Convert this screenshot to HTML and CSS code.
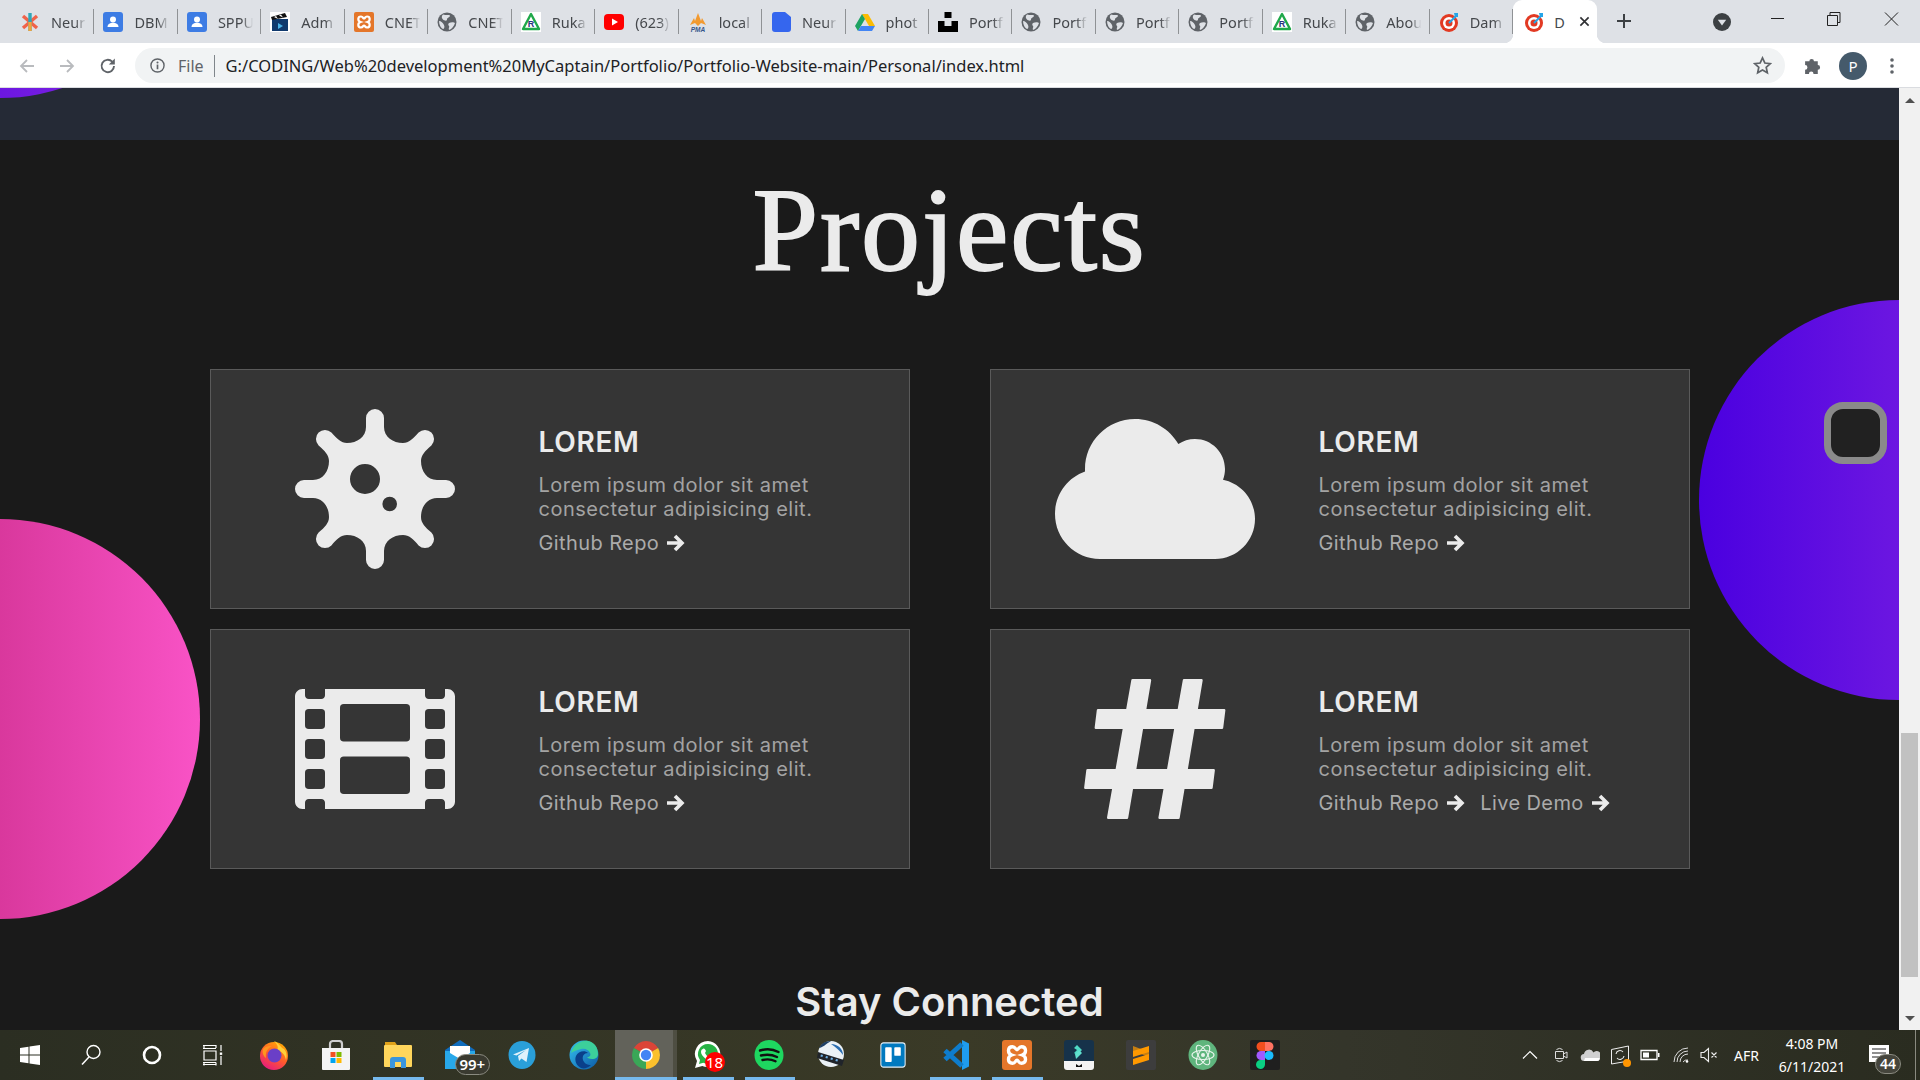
FILE: index.html
```html
<!DOCTYPE html>
<html lang="en">
<head>
<meta charset="utf-8">
<title>Projects</title>
<link rel="stylesheet" href="styles.css">
</head>
<body>
<svg class="defs" aria-hidden="true">
<defs>
<linearGradient id="edgeg" x1="0" y1="0" x2="1" y2="1"><stop offset="0" stop-color="#35c1f1"/><stop offset="1" stop-color="#0c59a4"/></linearGradient>
<linearGradient id="foxg" x1="0.8" y1="0" x2="0.2" y2="1"><stop offset="0" stop-color="#ffb000"/><stop offset="0.5" stop-color="#ff5a2c"/><stop offset="1" stop-color="#e31587"/></linearGradient>
<symbol id="f-star" viewBox="0 0 20 20"><path d="M3 4l14 12" stroke="#f0634a" stroke-width="3.4"/><path d="M3 16L17 4" stroke="#f0634a" stroke-width="3.4"/><path d="M10 1v18" stroke="#2fa6b8" stroke-width="3.4"/><path d="M10 10v9" stroke="#f2a23c" stroke-width="3.4"/></symbol>
<symbol id="f-user" viewBox="0 0 20 20"><rect width="20" height="20" rx="3" fill="#3d7ce4"/><circle cx="10" cy="7.5" r="3" fill="#fff"/><path d="M4.500 15c0-3 3-4.200 5.500-4.200s5.500 1.200 5.500 4.200z" fill="#fff"/></symbol>
<symbol id="f-clap" viewBox="0 0 20 20"><rect width="20" height="20" fill="#fff"/><path d="M2 7h16v12H2z" fill="#103a6e"/><path d="M1 5l14-4 2 4-15 3z" fill="#111"/><path d="M4 5l2-1 2 3zM9 3.500l2-1 2 3z" fill="#fff"/><path d="M8 11l5 3-5 3z" fill="#4ab3e8"/></symbol>
<symbol id="f-xampp" viewBox="0 0 20 20"><rect width="20" height="20" rx="2" fill="#e4762a"/><path d="M7 4.500C3.500 4.500 3.500 9 6.500 10 3.500 11 3.500 15.500 7 15.500c2 0 2-2 3-2s1 2 3 2c3.500 0 3.500-4.500.5-5.500 3-1 3-5.500-.5-5.500-2 0-2 2-3 2s-1-2-3-2z" fill="none" stroke="#fff" stroke-width="2.200"/></symbol>
<symbol id="f-globe" viewBox="0 0 20 20"><circle cx="10" cy="10" r="9.500" fill="#5f6368"/><path d="M6 2.500c3 1 6 0 7 1 0 2-3 2-3 4s-3 1-4 0-2-3 0-5zM12 11c2-1 5-1 6 0-1 3-3 6-6 7-1-2 1-3 0-4s-1-2 0-3zM2 9c2 0 4 2 5 4s0 4-1 4c-2-1-4-4-4-8z" fill="#dee1e6"/></symbol>
<symbol id="f-ruka" viewBox="0 0 20 20"><rect width="20" height="20" fill="#fff"/><path d="M10 2L2 17h16z" fill="none" stroke="#1fa84a" stroke-width="2.400" stroke-linejoin="round"/><text x="10" y="15" font-family="Liberation Sans" font-size="9" font-weight="700" text-anchor="middle" fill="#27347e">R</text></symbol>
<symbol id="f-yt" viewBox="0 0 20 20"><rect y="2" width="20" height="16" rx="4" fill="#f00"/><path d="M8 6.500l6 3.500-6 3.500z" fill="#fff"/></symbol>
<symbol id="f-pma" viewBox="0 0 20 20"><path d="M2 13L6 6l1 3 3-8 3 8 1-3 4 7-5-2-3 3-3-3z" fill="#f29a30"/><text x="10" y="19.500" font-family="Liberation Sans" font-size="6.500" font-weight="700" font-style="italic" text-anchor="middle" fill="#34558b">PMA</text></symbol>
<symbol id="f-neu" viewBox="0 0 20 20"><path d="M4 0h10l6 5v12a3 3 0 0 1-3 3H4a3 3 0 0 1-3-3V3a3 3 0 0 1 3-3z" fill="#3566ee"/></symbol>
<symbol id="f-drive" viewBox="0 0 20 20"><path d="M7 2h6l7 12h-6z" fill="#fbbc04"/><path d="M7 2L0 14l3 5 7-12z" fill="#1ea362"/><path d="M6 14h14l-3 5H3z" fill="#4285f4"/></symbol>
<symbol id="f-unsplash" viewBox="0 0 20 20"><path d="M6.500 0h7v6h-7zM0 9h6.500v5h7V9H20v11H0z" fill="#000"/></symbol>
<symbol id="f-target" viewBox="0 0 20 20"><circle cx="10" cy="11" r="9" fill="#e23a23"/><circle cx="10" cy="11" r="6" fill="#fff"/><circle cx="10" cy="11" r="3.500" fill="#e23a23"/><path d="M10 11L18 3" stroke="#25a5e8" stroke-width="2"/><path d="M15 1l4 0 0 4-3 0z" fill="#25a5e8"/></symbol>
<symbol id="arrow" viewBox="0 0 19 18"><path d="M1 9H16M9 2l7 7-7 7" fill="none" stroke="#ebebeb" stroke-width="3.600"/></symbol>
</defs>
</svg>

<header class="tabstrip">
  <div class="tab"><svg class="fav"><use href="#f-star"/></svg><span class="tab-title">Neur</span></div>
  <div class="tab"><svg class="fav"><use href="#f-user"/></svg><span class="tab-title">DBM</span></div>
  <div class="tab"><svg class="fav"><use href="#f-user"/></svg><span class="tab-title">SPPU</span></div>
  <div class="tab"><svg class="fav"><use href="#f-clap"/></svg><span class="tab-title">Adm</span></div>
  <div class="tab"><svg class="fav"><use href="#f-xampp"/></svg><span class="tab-title">CNET</span></div>
  <div class="tab"><svg class="fav"><use href="#f-globe"/></svg><span class="tab-title">CNET</span></div>
  <div class="tab"><svg class="fav"><use href="#f-ruka"/></svg><span class="tab-title">Ruka</span></div>
  <div class="tab"><svg class="fav"><use href="#f-yt"/></svg><span class="tab-title">(623)</span></div>
  <div class="tab"><svg class="fav"><use href="#f-pma"/></svg><span class="tab-title">local</span></div>
  <div class="tab"><svg class="fav"><use href="#f-neu"/></svg><span class="tab-title">Neur</span></div>
  <div class="tab"><svg class="fav"><use href="#f-drive"/></svg><span class="tab-title">phot</span></div>
  <div class="tab"><svg class="fav"><use href="#f-unsplash"/></svg><span class="tab-title">Portf</span></div>
  <div class="tab"><svg class="fav"><use href="#f-globe"/></svg><span class="tab-title">Portf</span></div>
  <div class="tab"><svg class="fav"><use href="#f-globe"/></svg><span class="tab-title">Portf</span></div>
  <div class="tab"><svg class="fav"><use href="#f-globe"/></svg><span class="tab-title">Portf</span></div>
  <div class="tab"><svg class="fav"><use href="#f-ruka"/></svg><span class="tab-title">Ruka</span></div>
  <div class="tab"><svg class="fav"><use href="#f-globe"/></svg><span class="tab-title">Abou</span></div>
  <div class="tab"><svg class="fav"><use href="#f-target"/></svg><span class="tab-title">Dam</span></div>
  <div class="tab tab-active"><svg class="fav"><use href="#f-target"/></svg><span class="tab-title tab-title-short">D</span>
    <svg class="tab-close" viewBox="0 0 12 12"><path d="M1.500 1.500l9 9M10.500 1.500l-9 9" stroke="#303134" stroke-width="1.800"/></svg></div>
  <svg class="newtab" viewBox="0 0 16 16"><path d="M8 1v14M1 8h14" stroke="#3c4043" stroke-width="2"/></svg>
  <svg class="tabsearch" viewBox="0 0 18 18"><circle cx="9" cy="9" r="9" fill="#3c4043"/><path d="M4.800 6.800h8.400L9 12.600z" fill="#dee1e6"/></svg>
  <div class="winctl">
    <svg class="winbtn" viewBox="0 0 57 43"><path d="M22 18.500h13" stroke="#222" stroke-width="1"/></svg>
    <svg class="winbtn" viewBox="0 0 57 43"><path d="M21.500 15.500h10v10h-10zM24 15.500v-3h10v10h-2.500" fill="none" stroke="#222" stroke-width="1"/></svg>
    <svg class="winbtn" viewBox="0 0 57 43"><path d="M22 12.500l13 13M35 12.500l-13 13" stroke="#222" stroke-width="1"/></svg>
  </div>
</header>

<div class="toolbar">
  <svg class="tool tool-back" viewBox="0 0 18 18"><path d="M16 9H3M9 3L3 9l6 6" fill="none" stroke="#b9bbbe" stroke-width="1.800"/></svg>
  <svg class="tool tool-fwd" viewBox="0 0 18 18"><path d="M2 9h13M9 3l6 6-6 6" fill="none" stroke="#b9bbbe" stroke-width="1.800"/></svg>
  <svg class="tool tool-reload" viewBox="0 0 18 18"><path d="M15 9a6.200 6.200 0 1 1-1.800-4.400" fill="none" stroke="#5f6368" stroke-width="1.900"/><path d="M15.800 1.500v6h-6z" fill="#5f6368"/></svg>
  <div class="omnibox">
    <svg class="info" viewBox="0 0 16 16"><circle cx="8" cy="8" r="7" fill="none" stroke="#5f6368" stroke-width="1.500"/><path d="M8 7v5" stroke="#5f6368" stroke-width="1.800"/><circle cx="8" cy="4.700" r="1.100" fill="#5f6368"/></svg>
    <span class="scheme">File</span>
    <span class="url">G:/CODING/Web%20development%20MyCaptain/Portfolio/Portfolio-Website-main/Personal/index.html</span>
    <svg class="star" viewBox="0 0 18 18"><path d="M9 1.800l2.200 4.800 5.200.6-3.900 3.500 1.100 5.200L9 13.300l-4.600 2.600 1.100-5.200L1.600 7.200l5.200-.6z" fill="none" stroke="#5f6368" stroke-width="1.600"/></svg>
  </div>
  <svg class="puzzle" viewBox="0 0 18 18"><path d="M2 5h4a2.200 2.200 0 1 1 4.400 0h3.600v3.600a2.200 2.200 0 1 1 0 4.400V17h-4a2.200 2.200 0 1 0-4.400 0H2v-4a2.200 2.200 0 1 0 0-4.400z" fill="#5f6368"/></svg>
  <span class="avatar">P</span>
  <svg class="dots" viewBox="0 0 4 18"><circle cx="2" cy="3" r="1.800" fill="#5f6368"/><circle cx="2" cy="9" r="1.800" fill="#5f6368"/><circle cx="2" cy="15" r="1.800" fill="#5f6368"/></svg>
</div>

<div class="viewport">
  <main class="page">
    <div class="band"></div>
    <section class="projects">
      <h1 class="title">Projects</h1>
      <div class="grid">
        <article class="card">
          <div class="card-icon">
            <svg class="ico-virus" viewBox="-81 -81 162 162"><path fill-rule="evenodd" fill="#ebebeb" d="M-9-71A9 9 0 0 1 9-71V-62C9-52 18-46 28-46 34-46 38-50 43.600-56.400A9 9 0 0 1 56.400-43.600C50-38 46-34 46-28 46-18 52-9 62-9H71A9 9 0 0 1 71 9H62C52 9 46 18 46 28 46 34 50 38 56.400 43.600A9 9 0 0 1 43.600 56.400C38 50 34 46 28 46 18 46 9 52 9 62V71A9 9 0 0 1-9 71V62C-9 52-18 46-28 46-34 46-38 50-43.600 56.400A9 9 0 0 1-56.400 43.600C-50 38-46 34-46 28-46 18-52 9-62 9H-71A9 9 0 0 1-71-9H-62C-52-9-46-18-46-28-46-34-50-38-56.400-43.600A9 9 0 0 1-43.600-56.400C-38-50-34-46-28-46-18-46-9-52-9-62ZM-25-10A15 15 0 1 0 5-10 15 15 0 1 0-25-10ZM7.400 15A7.300 7.300 0 1 0 22 15 7.300 7.300 0 1 0 7.400 15Z"/></svg>
          </div>
          <div class="card-body">
            <h3 class="card-title">LOREM</h3>
            <p class="card-text">Lorem ipsum dolor sit amet consectetur adipisicing elit.</p>
            <div class="links"><a class="link">Github Repo <svg class="arrow"><use href="#arrow"/></svg></a></div>
          </div>
        </article>
        <article class="card">
          <div class="card-icon">
            <svg class="ico-cloud" viewBox="0 32 640 448"><path fill="#ebebeb" d="M537.600 226.600c4.100-10.700 6.400-22.400 6.400-34.600 0-53-43-96-96-96-19.700 0-38.100 6-53.300 16.200C367 64.200 315.300 32 256 32c-88.400 0-160 71.600-160 160 0 2.700.1 5.400.2 8.100C40.200 219.800 0 273.200 0 336c0 79.500 64.500 144 144 144h368c70.700 0 128-57.300 128-128 0-61.900-44-113.600-102.400-125.400z"/></svg>
          </div>
          <div class="card-body">
            <h3 class="card-title">LOREM</h3>
            <p class="card-text">Lorem ipsum dolor sit amet consectetur adipisicing elit.</p>
            <div class="links"><a class="link">Github Repo <svg class="arrow"><use href="#arrow"/></svg></a></div>
          </div>
        </article>
        <article class="card">
          <div class="card-icon">
            <svg class="ico-film" viewBox="0 64 512 384"><path fill-rule="evenodd" fill="#ebebeb" d="M24 64h8v20c0 6.600 5.400 12 12 12h40c6.600 0 12-5.400 12-12V64h320v20c0 6.600 5.400 12 12 12h40c6.600 0 12-5.400 12-12V64h8c13.300 0 24 10.700 24 24v336c0 13.300-10.700 24-24 24h-8v-20c0-6.600-5.400-12-12-12h-40c-6.600 0-12 5.400-12 12v20H96v-20c0-6.600-5.400-12-12-12H44c-6.600 0-12 5.400-12 12v20h-8c-13.300 0-24-10.700-24-24V88c0-13.300 10.700-24 24-24ZM44 128a12 12 0 0 0-12 12v40a12 12 0 0 0 12 12h40a12 12 0 0 0 12-12v-40a12 12 0 0 0-12-12ZM44 224a12 12 0 0 0-12 12v40a12 12 0 0 0 12 12h40a12 12 0 0 0 12-12v-40a12 12 0 0 0-12-12ZM44 320a12 12 0 0 0-12 12v40a12 12 0 0 0 12 12h40a12 12 0 0 0 12-12v-40a12 12 0 0 0-12-12ZM428 128a12 12 0 0 0-12 12v40a12 12 0 0 0 12 12h40a12 12 0 0 0 12-12v-40a12 12 0 0 0-12-12ZM428 224a12 12 0 0 0-12 12v40a12 12 0 0 0 12 12h40a12 12 0 0 0 12-12v-40a12 12 0 0 0-12-12ZM428 320a12 12 0 0 0-12 12v40a12 12 0 0 0 12 12h40a12 12 0 0 0 12-12v-40a12 12 0 0 0-12-12ZM156 112a12 12 0 0 0-12 12v96a12 12 0 0 0 12 12h200a12 12 0 0 0 12-12v-96a12 12 0 0 0-12-12ZM156 280a12 12 0 0 0-12 12v96a12 12 0 0 0 12 12h200a12 12 0 0 0 12-12v-96a12 12 0 0 0-12-12Z"/></svg>
          </div>
          <div class="card-body">
            <h3 class="card-title">LOREM</h3>
            <p class="card-text">Lorem ipsum dolor sit amet consectetur adipisicing elit.</p>
            <div class="links"><a class="link">Github Repo <svg class="arrow"><use href="#arrow"/></svg></a></div>
          </div>
        </article>
        <article class="card">
          <div class="card-icon">
            <svg class="ico-hash" viewBox="0 0 142 140"><g fill="#ebebeb" stroke="#ebebeb" stroke-width="2.400" stroke-linejoin="round"><path d="M48.500 1.200H66L43 138.800H24.200Z"/><path d="M100 1.200H117.500L94.500 138.800H75.600Z"/><path d="M14 31.200H140.200L138 48.800H11.800Z"/><path d="M3.500 91.200H129.700L127.500 108.800H1.300Z"/></g></svg>
          </div>
          <div class="card-body">
            <h3 class="card-title">LOREM</h3>
            <p class="card-text">Lorem ipsum dolor sit amet consectetur adipisicing elit.</p>
            <div class="links"><a class="link">Github Repo <svg class="arrow"><use href="#arrow"/></svg></a><a class="link">Live Demo <svg class="arrow"><use href="#arrow"/></svg></a></div>
          </div>
        </article>
      </div>
      <h2 class="connected">Stay Connected</h2>
    </section>
    <div class="blob blob-top"></div>
    <div class="blob blob-pink"></div>
    <div class="blob blob-purple"></div>
    <div class="toggle"></div>
  </main>
  <aside class="scrollbar">
    <span class="sb-up"></span>
    <span class="sb-thumb"></span>
    <span class="sb-down"></span>
  </aside>
</div>

<footer class="taskbar">
  <div class="sys-item"><svg class="ti-win" viewBox="0 0 20 20"><path d="M0 3l8.500-1.200V9.500H0zM9.500 1.600L20 0v9.500H9.500zM0 10.500h8.500v7.700L0 17zM9.500 10.500H20V20L9.500 18.400z" fill="#fff"/></svg></div>
  <div class="sys-item"><svg class="ti-sys" viewBox="0 0 22 22"><circle cx="13.500" cy="8" r="6.500" fill="none" stroke="#fff" stroke-width="1.400"/><path d="M9 13L2 20.500" stroke="#fff" stroke-width="1.500"/></svg></div>
  <div class="sys-item"><svg class="ti-sys" viewBox="0 0 22 22"><circle cx="11" cy="11" r="8" fill="none" stroke="#fff" stroke-width="2.600"/></svg></div>
  <div class="sys-item"><svg class="ti-sys" viewBox="0 0 22 22"><path d="M1 1.500h13M1 4.500h13M2 7h12v9H2zM1 18.500h13M1 20.500h13M2 18.500v3M14 18.500v3M2 1v3M14 1v3M19 1v6M19 12v9" fill="none" stroke="#fff" stroke-width="1.200"/><rect x="17.800" y="8.500" width="2.400" height="2.400" fill="#fff"/></svg></div>

  <div class="app"><svg class="ti-app" viewBox="0 0 30 30"><circle cx="15" cy="16" r="14" fill="url(#foxg)"/><path d="M15 1c5 2 6 6 10 8 3 3 3 8 2 11-1-6-5-9-9-10C20 7 18 4 15 1z" fill="#ffd03a"/><circle cx="15.500" cy="15.500" r="7" fill="#6a3fc7"/><path d="M4 9c3-3 5-3 9-3-4 2-7 6-6 12C4 16 3 12 4 9z" fill="#ff9520"/></svg></div>
  <div class="app"><svg class="ti-app" viewBox="0 0 30 30"><path d="M9 9V4a3 3 0 0 1 3-3h6a3 3 0 0 1 3 3v5" fill="none" stroke="#cfcfcf" stroke-width="2.200"/><path d="M1 8h28v21a1 1 0 0 1-1 1H2a1 1 0 0 1-1-1z" fill="#f4f4f4"/><rect x="9.500" y="12" width="5" height="5" fill="#f25022"/><rect x="15.500" y="12" width="5" height="5" fill="#7fba00"/><rect x="9.500" y="18" width="5" height="5" fill="#00a4ef"/><rect x="15.500" y="18" width="5" height="5" fill="#ffb900"/></svg></div>
  <div class="app app-on"><svg class="ti-app" viewBox="0 0 30 30"><path d="M2 2h10l2 3H2z" fill="#e0a21a"/><path d="M2 5h26a1 1 0 0 1 1 1v20a1 1 0 0 1-1 1H2a1 1 0 0 1-1-1V6a1 1 0 0 1 1-1z" fill="#ffd65c"/><path d="M7 28v-8a3 3 0 0 1 3-3h10a3 3 0 0 1 3 3v8h-5v-6h-6v6z" fill="#3a96dd"/></svg></div>
  <div class="app"><svg class="ti-app" viewBox="0 0 30 30"><path d="M0 10L15 0l15 10v19H0z" fill="#0f6cbd"/><path d="M0 11h30v18H0z" fill="#28a8ea"/><path d="M5 6h20v7L15 19 5 13z" fill="#fff"/></svg><span class="badge badge-mail">99+</span></div>
  <div class="app"><svg class="ti-app" viewBox="0 0 30 30"><ellipse cx="15" cy="15" rx="13.500" ry="14" fill="#2a9fd9"/><path d="M6 14.500L22 8l-2.500 14-5-3.500-2.500 2.500-1-5 8-6-9.500 5.500z" fill="#dff1fb"/></svg></div>
  <div class="app"><svg class="ti-app" viewBox="0 0 30 30"><circle cx="15" cy="15" r="14.500" fill="url(#edgeg)"/><path d="M2 13C4 5 12 0 19 1c6 1 10 6 10 13 0 3-2 5-6 5-3 0-4-1-5-2 3 0 4-2 3-4-1-3-5-5-9-4-5 1-8 3-10 4z" fill="#3ccf9b"/><path d="M7 16c2-5 9-6 12-3-4 0-6 3-5 7 1 3 4 5 8 5-3 3-7 4-10 3-4-2-7-7-5-12z" fill="#0a3f8a"/></svg></div>
  <div class="app app-active"><svg class="ti-app" viewBox="0 0 30 30"><path d="M15 15L2.900 8A14 14 0 0 1 27.100 8z" fill="#db4437"/><path d="M15 15L27.100 8A14 14 0 0 1 15 29z" fill="#fbc02d"/><path d="M15 15V29A14 14 0 0 1 2.900 8z" fill="#3aa757"/><circle cx="15" cy="15" r="6.800" fill="#fff"/><circle cx="15" cy="15" r="5.200" fill="#4285f4"/></svg></div>
  <div class="app app-on"><svg class="ti-app" viewBox="0 0 30 30"><path d="M15 1a13 13 0 0 0-11 20L2 28l7.300-2A13 13 0 1 0 15 1z" fill="#fff"/><path d="M15 4a10 10 0 0 0-8 16l-1 4 4.300-1.200A10 10 0 1 0 15 4z" fill="#27b345"/><path d="M10 9c1-1 2 0 3 2l-1 2c1 2 2 3 4 4l2-1c2 1 3 2 2 3-2 2-4 2-7 0s-5-5-5-7 1-3 2-3z" fill="#fff"/></svg><span class="badge badge-wa">18</span></div>
  <div class="app app-on"><svg class="ti-app" viewBox="0 0 30 30"><ellipse cx="15" cy="15" rx="14.500" ry="15" fill="#1ed760"/><path d="M6 10.500c6-2 13-1.500 18.500 1.500M7 15.500c6-1.500 11-1 16 1.500M8.500 20c4-1 9-.8 13 1.300" fill="none" stroke="#111" stroke-width="2.400" stroke-linecap="round"/></svg></div>
  <div class="app"><svg class="ti-app" viewBox="0 0 30 30"><circle cx="15" cy="14" r="13" fill="#eaf1f6"/><path d="M3 8a13 13 0 0 1 12-7c-5 3-9 7-12 7z" fill="#1d3f66"/><path d="M15 4c7 0 12 5 12 11-3-4-7-8-12-11z" fill="#2a6db0"/><path d="M2 12l26 8-2 6-25-8z" fill="#20242a"/><path d="M5 14.500l2 .6-.6 2-2-.6zM10 16l2 .6-.6 2-2-.6zM15 17.500l2 .6-.6 2-2-.6zM20 19l2 .6-.6 2-2-.6z" fill="#6fb1e8"/></svg></div>
  <div class="app"><svg class="ti-trello" viewBox="0 0 30 30"><rect x="1" y="1" width="28" height="28" rx="3" fill="#0079bf" stroke="#e7eef3" stroke-width="1.200"/><rect x="6" y="6" width="7.500" height="17" rx="1" fill="#fff"/><rect x="16.500" y="6" width="7.500" height="10" rx="1" fill="#fff"/></svg></div>
  <div class="app app-on"><svg class="ti-app" viewBox="0 0 30 30"><path d="M22 0l7 3.500v23L22 30z" fill="#1f9cf0"/><path d="M22 4L5 19.500M22 26L5 10.500" fill="none" stroke="#0e7ccc" stroke-width="5"/></svg></div>
  <div class="app app-on"><svg class="ti-app" viewBox="0 0 20 20"><use href="#f-xampp"/></svg></div>
  <div class="app"><svg class="ti-app" viewBox="0 0 30 30"><path d="M0 3a3 3 0 0 1 3-3h24a3 3 0 0 1 3 3v18H0z" fill="#16324a"/><path d="M0 21h30v6a3 3 0 0 1-3 3H3a3 3 0 0 1-3-3z" fill="#f4f4f4"/><path d="M13 5l5 5-5 5-3-2 3-3-3-2z" fill="#4fd8c4"/><path d="M11 14l4-4 3 3-6 6z" fill="#61e0cf"/><path d="M12 24l3 2 3-2v3h-6z" fill="#111"/></svg></div>
  <div class="app"><svg class="ti-app" viewBox="0 0 30 30"><rect width="30" height="30" rx="2" fill="#3d3d3d"/><path d="M7 11l16-5v6L7 17zM7 19l16-5v6L7 25z" fill="#ff9800"/><path d="M7 11l16 6v-5L7 6z" fill="#ff9800" opacity=".7"/></svg></div>
  <div class="app"><svg class="ti-app" viewBox="0 0 30 30"><ellipse cx="15" cy="15" rx="14.500" ry="15" fill="#5fb57d"/><g fill="none" stroke="#e8f4ec" stroke-width="1.100"><ellipse cx="15" cy="15" rx="11" ry="4.500"/><ellipse cx="15" cy="15" rx="11" ry="4.500" transform="rotate(60 15 15)"/><ellipse cx="15" cy="15" rx="11" ry="4.500" transform="rotate(120 15 15)"/></g><circle cx="15" cy="15" r="2" fill="#e8f4ec"/></svg></div>
  <div class="app"><svg class="ti-app" viewBox="0 0 30 30"><rect width="30" height="30" rx="2" fill="#1f1f1f"/><path d="M15 2h-4a4.500 4.500 0 0 0 0 9h4z" fill="#f24e1e"/><path d="M15 2h4a4.500 4.500 0 0 1 0 9h-4z" fill="#ff7262"/><path d="M15 11h-4a4.500 4.500 0 0 0 0 9h4z" fill="#a259ff"/><circle cx="19" cy="15.500" r="4.500" fill="#1abcfe"/><path d="M11 20h4v4.500a4.500 4.500 0 1 1-4-4.500z" fill="#0acf83"/></svg></div>

  <div class="tray">
    <svg class="tray-ico tray-caret" viewBox="0 0 16 16"><path d="M1 11.500L8 4.500l7 7" fill="none" stroke="#fff" stroke-width="1.200"/></svg>
    <svg class="tray-ico tray-meet" viewBox="0 0 16 16"><path d="M2.500 4.500h8v7h-8zM10.500 7l3.500-2v6l-3.500-2zM3.500 2.500a5 5 0 0 1 6 0M3.500 13.500a5 5 0 0 0 6 0" fill="none" stroke="#ddd" stroke-width="1"/></svg>
    <svg class="tray-ico tray-cloud" viewBox="0 0 20 14"><path d="M4.500 13a3.500 3.500 0 0 1-.5-7 5 5 0 0 1 9.500-1.500A4 4 0 0 1 19.800 10a3 3 0 0 1-2.800 3z" fill="#d0d0d0"/><path d="M4 13h13a3 3 0 0 0 2.800-3H5z" fill="#fff"/></svg>
    <span class="tray-sync"><svg class="tray-ico" viewBox="0 0 20 20"><path d="M1.500 4.500L18.500 1v15l-17 3z" fill="none" stroke="#eee" stroke-width="1"/><path d="M6 9a4 4 0 0 1 7-2M14 11a4 4 0 0 1-7 2" fill="none" stroke="#eee" stroke-width="1.100"/></svg><span class="sync-dot"></span></span>
    <svg class="tray-ico tray-batt" viewBox="0 0 20 12"><path d="M1 1.500h16v9H1z" fill="none" stroke="#fff" stroke-width="1.300"/><rect x="3" y="3.500" width="6" height="5" fill="#fff"/><rect x="18" y="4" width="1.500" height="4" fill="#fff"/></svg>
    <svg class="tray-ico tray-wifi" viewBox="0 0 16 16"><path d="M1 15A14 14 0 0 1 15 1M4 15A11 11 0 0 1 15 4M7 15a8 8 0 0 1 8-8M10 15a5 5 0 0 1 5-2" fill="none" stroke="#ddd" stroke-width="1"/><circle cx="14" cy="14.500" r="1.300" fill="#fff"/></svg>
    <svg class="tray-ico tray-mute" viewBox="0 0 18 16"><path d="M1 5.500h3L8.500 1.500v13L4 10.500H1zM11.500 5.500l5 5M16.500 5.500l-5 5" fill="none" stroke="#eee" stroke-width="1.100"/></svg>
    <span class="lang">AFR</span>
    <div class="clock"><span>4:08 PM</span><span>6/11/2021</span></div>
    <span class="notif"><svg class="notif-ico" viewBox="0 0 20 17"><path d="M0 0h20v17H0z" fill="#fff"/><path d="M3 4h14M3 8h14M3 12h14" stroke="#222" stroke-width="1.200"/></svg><span class="badge badge-notif">44</span></span>
    <span class="peek"></span>
  </div>
</footer>
</body>
</html>
```
FILE: styles.css
```css
* { box-sizing: border-box; }
html, body { margin: 0; padding: 0; }
body {
  width: 1920px;
  height: 1080px;
  overflow: hidden;
  display: flex;
  flex-direction: column;
  font-family: "Inter", "Liberation Sans", sans-serif;
  background: #1a1a1a;
}
.defs { position: absolute; width: 0; height: 0; }

/* tab strip */
.tabstrip {
  flex: none;
  height: 43px;
  display: flex;
  padding-left: 11px;
  background: #dee1e6;
  font-family: "Noto Sans", "Liberation Sans", sans-serif;
}
.tab {
  position: relative;
  flex: none;
  width: 83.46px;
  height: 43px;
  padding-left: 9px;
  display: flex;
  align-items: center;
  gap: 11px;
}
.tab::after {
  content: "";
  position: absolute;
  right: 0;
  top: 9px;
  width: 1px;
  height: 25px;
  background: #8f9295;
}
.fav { flex: none; width: 20px; height: 20px; }
.tab-title {
  width: 40px;
  white-space: nowrap;
  font-size: 14.5px;
  color: #45484c;
  -webkit-mask-image: linear-gradient(to right, #000 60%, transparent 88%);
  mask-image: linear-gradient(to right, #000 60%, transparent 88%);
}
.tab-active {
  background: #fff;
  border-radius: 9px 9px 0 0;
  gap: 10px;
  padding-left: 11px;
}
.tab-active::after {
  top: auto;
  right: -9px;
  bottom: 0;
  width: 9px;
  height: 9px;
  background: radial-gradient(circle at 100% 0, transparent 9px, #fff 9.5px);
}
.tab-active::before {
  content: "";
  position: absolute;
  left: -9px;
  bottom: 0;
  width: 9px;
  height: 9px;
  background: radial-gradient(circle at 0 0, transparent 9px, #fff 9.5px);
}
.tab-title-short { width: 8px; -webkit-mask-image: none; mask-image: none; }
.tab-close { flex: none; width: 11px; height: 11px; margin-left: 7px; }
.newtab { flex: none; width: 16px; height: 16px; margin: 13px 0 0 19px; }
.tabsearch { flex: none; width: 18px; height: 18px; margin: 13px 0 0 81px; }
.winctl { margin-left: auto; display: flex; }
.winbtn { width: 57px; height: 43px; }

/* toolbar */
.toolbar {
  flex: none;
  height: 45px;
  display: flex;
  align-items: center;
  background: #fff;
  border-bottom: 1px solid #dadce0;
  padding-top: 1px;
}
.tool { flex: none; width: 18px; height: 18px; }
.tool-back { margin-left: 18px; }
.tool-fwd { margin-left: 22px; }
.tool-reload { margin-left: 23px; }
.omnibox {
  flex: none;
  width: 1650px;
  height: 35px;
  margin-left: 18px;
  border-radius: 18px;
  background: #f1f3f4;
  display: flex;
  align-items: center;
  padding-left: 15px;
  font-family: "Noto Sans", "Liberation Sans", sans-serif;
}
.info { flex: none; width: 15px; height: 15px; }
.scheme {
  margin-left: 13px;
  padding-right: 10px;
  font-size: 16px;
  line-height: 22px;
  color: #5f6368;
  border-right: 1px solid #80868b;
}
.url {
  margin-left: 11px;
  font-size: 16.5px;
  color: #202124;
  white-space: nowrap;
}
.star { flex: none; width: 19px; height: 19px; margin-left: auto; margin-right: 13px; }
.puzzle { flex: none; width: 19px; height: 19px; margin-left: 18px; }
.avatar {
  flex: none;
  width: 28px;
  height: 28px;
  margin-left: 17px;
  border-radius: 50%;
  background: #455a6b;
  color: #fff;
  font: 15px/28px "Noto Sans", sans-serif;
  text-align: center;
}
.dots { flex: none; width: 4px; height: 18px; margin-left: 23px; }

/* page */
.viewport { flex: 1; min-height: 0; display: flex; }
.page { position: relative; flex: 1; min-width: 0; overflow: hidden; background: #1a1a1a; }
.band { height: 52px; background: #252a36; }
.projects { display: flex; flex-direction: column; align-items: center; padding-top: 20px; }
.title {
  margin: 0 0 67px;
  font: 400 118px/142px "Liberation Serif", serif;
  letter-spacing: 1.7px;
  color: #ebebeb;
  -webkit-text-stroke: 1.8px #ebebeb;
}
.grid {
  display: grid;
  grid-template-columns: 700px 700px;
  grid-auto-rows: 240px;
  gap: 20px 80px;
}
.card {
  display: grid;
  grid-template-columns: 328px 1fr;
  align-items: center;
  background: #353535;
  border: 1px solid #5a5a5a;
}
.card-icon { display: flex; justify-content: center; align-items: center; }
.ico-virus { width: 162px; height: 162px; }
.ico-cloud { width: 200px; height: 140px; }
.ico-film { width: 160px; height: 120px; }
.ico-hash { width: 142px; height: 140px; }
.card-body { padding-top: 2px; }
.card-title {
  margin: 0 0 13px;
  font-size: 28px;
  line-height: 36px;
  font-weight: 600;
  letter-spacing: .7px;
  color: #ebebeb;
}
.card-text {
  margin: 0 0 8px;
  width: 300px;
  font-size: 20px;
  line-height: 24px;
  letter-spacing: .52px;
  color: #a3a3a3;
}
.links { display: flex; gap: 15px; }
.link {
  display: flex;
  align-items: center;
  gap: 7px;
  font-size: 20px;
  line-height: 28px;
  letter-spacing: .4px;
  color: #ababab;
}
.arrow { flex: none; width: 19px; height: 18px; }
.connected {
  margin: 110px 0 0;
  font-size: 40px;
  line-height: 46px;
  font-weight: 600;
  color: #ebebeb;
}
.blob { position: absolute; width: 400px; height: 400px; border-radius: 50%; }
.blob-top { left: -200px; top: -390px; background: linear-gradient(to left, #8e2de2, #4a00e0); }
.blob-pink { left: -200px; top: 431px; background: linear-gradient(to left, #f953c6, #b91d73); }
.blob-purple { right: -200px; top: 212px; background: linear-gradient(to left, #8e2de2, #4a00e0); }
.toggle {
  position: absolute;
  left: 1824px;
  top: 314px;
  width: 63px;
  height: 62px;
  border: 7px solid #8a8a8a;
  border-radius: 19px;
  background: #212121;
}

/* scrollbar */
.scrollbar { flex: none; width: 21px; background: #f1f1f1; display: flex; flex-direction: column; align-items: center; }
.sb-up, .sb-down { width: 0; height: 0; border-left: 5px solid transparent; border-right: 5px solid transparent; }
.sb-up { margin-top: 10px; border-bottom: 5px solid #505050; }
.sb-thumb { width: 17px; height: 244px; margin-top: 630px; background: #c1c1c1; }
.sb-down { margin-top: 39px; border-top: 5px solid #505050; }

/* taskbar */
.taskbar {
  flex: none;
  height: 50px;
  display: flex;
  align-items: stretch;
  background: linear-gradient(to right, #2b2e22 0%, #3a3a27 50%, #34352a 70%, #2a2c20 100%);
  color: #fff;
  font-family: "Noto Sans", "Liberation Sans", sans-serif;
}
.sys-item { flex: none; width: 60.75px; display: flex; align-items: center; justify-content: center; }
.ti-win { width: 20px; height: 20px; }
.ti-sys { width: 22px; height: 22px; }
.app { position: relative; flex: none; width: 61.95px; display: flex; align-items: center; justify-content: center; }
.ti-app { width: 30px; height: 30px; }
.ti-trello { width: 26px; height: 26px; }
.app-on::after, .app-active::after {
  content: "";
  position: absolute;
  left: 6px;
  right: 5px;
  bottom: 0;
  height: 3px;
  background: #76b9ed;
}
.app-active { background: linear-gradient(to right, #62625a 93%, #4e4e42 93%); }
.app-active::after { left: 0; right: 0; }
.badge { position: absolute; text-align: center; }
.badge-mail {
  left: 26px;
  top: 24px;
  width: 35px;
  height: 21px;
  line-height: 19px;
  font-size: 15px;
  font-weight: 600;
  border: 1px solid #8a8a80;
  border-radius: 11px;
  background: #3a3a30;
}
.badge-wa {
  left: 28px;
  top: 22px;
  width: 20px;
  height: 20px;
  line-height: 20px;
  font-size: 15px;
  border-radius: 50%;
  background: #f00;
}
.tray { position: relative; flex: none; width: 398px; margin-left: auto; display: flex; align-items: center; }
.tray-ico { flex: none; width: 16px; height: 16px; }
.tray-meet { margin-left: 15px; }
.tray-cloud { width: 20px; height: 14px; margin-left: 11px; }
.tray-sync { position: relative; display: flex; margin-left: 10px; }
.tray-sync .tray-ico { width: 20px; height: 20px; }
.sync-dot { position: absolute; right: -1px; bottom: -2px; width: 8px; height: 8px; border-radius: 50%; background: #ff9500; }
.tray-batt { width: 20px; height: 12px; margin-left: 10px; }
.tray-wifi { margin-left: 13px; }
.tray-mute { width: 18px; margin-left: 11px; }
.lang { flex: none; width: 26px; margin-left: 16px; font-size: 14px; }
.clock { display: flex; flex-direction: column; align-items: center; flex: none; margin-left: 16px; width: 72px; font-size: 14px; line-height: 23px; }
.notif { position: relative; display: flex; align-self: flex-start; margin: 15px 0 0 21px; }
.notif-ico { width: 20px; height: 17px; }
.badge-notif {
  left: 6px;
  top: 9px;
  width: 26px;
  height: 20px;
  line-height: 18px;
  font-size: 14px;
  font-weight: 600;
  border: 1px solid #8a8a80;
  border-radius: 11px;
  background: #45453c;
}
.peek { position: absolute; right: 4px; top: 0; width: 1px; height: 50px; background: #8a8a80; }
```
